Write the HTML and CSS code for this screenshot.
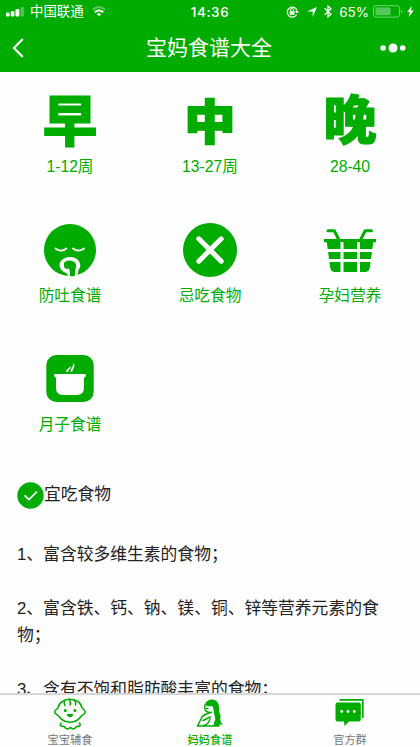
FILE: index.html
```html
<!DOCTYPE html>
<html lang="zh-CN">
<head>
<meta charset="utf-8">
<title>宝妈食谱大全</title>
<link rel="stylesheet" href="styles.css">
</head>
<body>
<div class="phone">
  <header class="header">
    <div class="status">
      <div class="status-side">
        <svg class="signal" width="20" height="10" viewBox="0 0 20 10" fill="#fff"><rect y="5.5" width="3.6" height="4" rx="1.2"/><rect x="4.8" y="4" width="3.6" height="5.5" rx="1.2"/><rect x="9.5" y="2" width="3.8" height="7.5" rx="1.2"/><rect x="14.4" y="0" width="3.8" height="9.5" rx="1.2" opacity=".3"/></svg>
        <span class="carrier">中国联通</span>
        <svg class="wifi" width="14" height="11" viewBox="0 0 14 11" fill="none" stroke="#fff" stroke-width="2"><path d="M.8 3.8Q7-1.6 13.2 3.8" opacity=".35"/><path d="M2.8 6.2Q7 2.8 11.2 6.2"/><path d="M4.8 8Q7 6.4 9.2 8L7 10.3Z" fill="#fff" stroke="none"/></svg>
      </div>
      <time class="clock">14:36</time>
      <div class="status-side status-right">
        <svg width="13" height="12" viewBox="0 0 13 12"><path d="M10.6 8.6A5 5 0 1 1 11 4.5" fill="none" stroke="#fff" stroke-width="1.2"/><path d="M9 5h4l-2 2.5zM3.6 5.2h5v3.6h-5z" fill="#fff"/><path d="M4.600 5.200V4a1.500 1.500 0 0 1 3 0v1.200" fill="none" stroke="#fff"/></svg>
        <svg class="locate" width="10" height="10" viewBox="0 0 10 10"><path d="M10 0 5.700 10V4.600L0 4.500z" fill="#fff"/></svg>
        <svg class="bluetooth" width="8" height="13" viewBox="0 0 8 13"><path d="M.6 3.300 7 9.300 4 12V1l3 2.700-6.400 6" fill="none" stroke="#fff" stroke-width="1.200"/></svg>
        <span class="percent">65%</span>
        <svg width="30" height="13" viewBox="0 0 30 13"><rect x=".5" y=".7" width="26" height="11.400" rx="2.600" fill="none" stroke="#70d577"/><rect x="2.400" y="2.500" width="15.200" height="7.800" rx="1" fill="#55c85b"/><path d="M28 4.500q2 1.800 0 3.800z" fill="#82d985"/></svg>
        <svg class="bolt" width="7" height="11" viewBox="0 0 7 11"><path d="M4.800 0 .2 6h2.500L1.800 11 6.700 4.600H4z" fill="#fff"/></svg>
      </div>
    </div>
    <div class="navbar">
      <svg width="12" height="20" viewBox="0 0 12 20"><path d="M10.800 1 2 10l8.800 9" fill="none" stroke="#fff" stroke-width="2.200"/></svg>
      <h1>宝妈食谱大全</h1>
      <svg width="26" height="10" viewBox="0 0 26 10" fill="#fff"><circle cx="3.100" cy="5" r="2.800"/><circle cx="13" cy="5" r="4.500"/><circle cx="22.700" cy="5" r="2.800"/></svg>
    </div>
  </header>

  <main class="content">
    <nav class="menu">
      <a class="item"><span class="art glyph">早</span><span class="label">1-12周</span></a>
      <a class="item"><span class="art glyph glyph-mid">中</span><span class="label">13-27周</span></a>
      <a class="item"><span class="art glyph glyph-late">晚</span><span class="label">28-40</span></a>
      <a class="item">
        <svg class="art" viewBox="0 0 54 54"><circle cx="27" cy="27" r="26" fill="#00ac00"/><path d="M12.500 25.500q5.500 4.200 11 0M30 25.500q5.500 4.200 11 0" fill="none" stroke="#fff" stroke-width="1.800" stroke-linecap="round"/><path d="M25 53.500C25 49.500 21.500 50 19 47.500 13 41 19 34 27 34c9 0 13 8 8.500 13L34 53.500z" fill="#fff"/><path d="M21 40c1.500-2.500 5-2.500 7-2.300 5.500.8 6 5 4.500 8.300l-.8 7.300h-4.700c-.5-3 .5-5-1-7.500-2.500.3-5-.5-5-2.500z" fill="#00ac00"/></svg>
        <span class="label">防吐食谱</span>
      </a>
      <a class="item">
        <svg class="art" viewBox="0 0 54 54"><circle cx="27" cy="27" r="27" fill="#00ac00"/><path d="m15.800 15.800 22.400 22.400m0-22.400L15.800 38.200" stroke="#fff" stroke-width="5" stroke-linecap="round"/></svg>
        <span class="label">忌吃食物</span>
      </a>
      <a class="item">
        <svg class="art" viewBox="0 0 54 54"><path d="M5 7.700h6.300L16 17M48.500 7.700h-6.300L37.500 17" fill="none" stroke="#00ac00" stroke-width="3" stroke-linecap="round" stroke-linejoin="round"/><path d="M1 16h52v3.200h-2.800L47 43.500q-.7 5.500-5 5.500H12q-4.300 0-5-5.500L3.800 19.200H1z" fill="#00ac00"/><path d="M2 27.500h50M3 37.500h48M19 19v30M35.500 19v30" stroke="#fff" stroke-width="3"/></svg>
        <span class="label">孕妇营养</span>
      </a>
      <a class="item">
        <svg class="art" viewBox="0 0 54 54"><rect x="3.300" y="3" width="47.400" height="47" rx="10" fill="#00ac00"/><path d="M11.500 22h31q1 2.500-1 3.500h-.6V36q0 7-7 7H20q-7 0-7-7V25.500h-.5q-2-1-1-3.500zM23 19.800c0-3 4-3.300 4.200-6 1.800 3-2.200 3.500-2 6zm4.500 0c0-4 2.900-4.200 2.600-8.800 3.400 4-.7 5-.7 8.800z" fill="#fff"/></svg>
        <span class="label">月子食谱</span>
      </a>
    </nav>
    <section class="article">
      <h2><svg width="27" height="27" viewBox="0 0 27 27"><circle cx="13.500" cy="13.500" r="13.200" fill="#00ac00"/><path d="m7.500 13.300 4.400 4.300 8.100-8" fill="none" stroke="#fff" stroke-width="1.700"/></svg><span>宜吃食物</span></h2>
      <p>1、富含较多维生素的食物；</p>
      <p>2、富含铁、钙、钠、镁、铜、锌等营养元素的食物；</p>
      <p>3、含有不饱和脂肪酸丰富的食物；</p>
    </section>
  </main>

  <footer class="tabbar">
    <a class="tab">
      <svg width="34" height="32" viewBox="0 0 34 32" fill="none" stroke="#00ac00" stroke-width="1.500" stroke-linecap="round" stroke-linejoin="round"><path d="M5 9.500C7.500-1.500 26.500-1.500 29 9.500c.5 1.500 3.300 2.500 3.300 4.500 0 2.300-2.800 2.500-4.300 4.500-5.500 7.500-16.500 7.500-22 0-1.500-2-4.300-2.200-4.300-4.500C1.700 12 4.500 11 5 9.500z"/><path d="M11.500 2.500q-1 2.500.5 5M16 1.500q2.500 2.500 1 5.500M21 2q2.500 2.500 1.500 5"/><path d="M8 25q-2.500 3.200 3 3.500 3.500 4.500 6.500.8 3 3.700 6-.8 5.500-.3 3-3.500"/><circle cx="12.300" cy="12.500" r=".8" fill="#00ac00"/><circle cx="22" cy="12.500" r=".8" fill="#00ac00"/><path d="M14.500 16.800h5q-2.300 3.500-5 0z" fill="#00ac00"/></svg>
      <span>宝宝辅食</span>
    </a>
    <a class="tab active">
      <svg width="34" height="32" viewBox="0 0 34 32"><path d="M12 7C13 1 22-.5 25 5c2 4 .2 7.500 2 11 1.400 3-.4 4.500.5 7 .8 2.200 1.800 2.500 2 3-2.500 2-5.500 0-5.500-2-1 2-2.500 1.500-3 .5 3-4-.5-7 0-11l-1.500-5.500q-4 1-7.500-1z" fill="#00ac00"/><g fill="none" stroke="#00ac00" stroke-width="1.500" stroke-linecap="round" stroke-linejoin="round"><path d="M12 7c-1.500 6 2.500 8 6.500 7.200-2 .8-7.500 1.800-9.500 4.800L4.500 28H26l-2-3M9.500 28c5-1.500 6-3 7.500-6.500M10 22.500l7.500-3.500M13.500 10.500h1.500"/></g><path d="m22 23 4 5h-6z" fill="#00ac00"/></svg>
      <span>妈妈食谱</span>
    </a>
    <a class="tab">
      <svg width="34" height="32" viewBox="0 0 34 32"><path d="M6.500 1.900h23.300V20" fill="none" stroke="#00ac00" stroke-width="1.700" stroke-linejoin="round"/><path d="M4.500 4.500h21.300q2 0 2 2v15q0 2-2 2H16L11.500 28 11 23.500H4.500q-2 0-2-2v-15q0-2 2-2z" fill="#00ac00"/><g fill="#fff"><circle cx="8.700" cy="13.500" r="1.400"/><circle cx="15" cy="13.500" r="1.400"/><circle cx="21.300" cy="13.500" r="1.400"/></g></svg>
      <span>官方群</span>
    </a>
  </footer>
</div>
</body>
</html>
```
FILE: styles.css
```css
* { box-sizing: border-box; }
body { margin: 0; font-family: "Liberation Sans", "Noto Sans CJK SC", sans-serif; background: #fefefe; }
.phone { display: flex; flex-direction: column; width: 420px; height: 747px; overflow: hidden; }
svg { display: block; flex: none; }
.header { height: 72px; flex: none; background: #00ac00; color: #fff; }
.status { display: grid; grid-template-columns: 1fr auto 1fr; align-items: center; height: 23px; padding: 0 6px; }
.status-side { display: flex; align-items: center; }
.status-right { justify-content: flex-end; }
.carrier { margin-left: 4px; font-size: 13.4px; line-height: 20px; }
.wifi { margin-left: 8px; }
.clock { font-family: Inter, sans-serif; font-size: 13.5px; font-weight: 500; letter-spacing: .6px; }
.locate { margin-left: 8px; }
.bluetooth { margin-left: 7px; }
.percent { margin: 0 4px 0 7px; font-family: Inter, sans-serif; font-size: 13.5px; }
.bolt { margin-left: 4px; }
.navbar { display: flex; align-items: center; justify-content: space-between; height: 49px; padding: 0 14px 0 12px; }
.navbar h1 { margin: 0 0 0 14px; font-size: 21px; font-weight: 400; line-height: 30px; }
.content { flex: 1; min-height: 0; overflow: hidden; }
.menu { display: grid; grid-template-columns: repeat(3, 140px); grid-auto-rows: 129px; padding-top: 22px; color: #00ac00; }
.item { display: flex; flex-direction: column; align-items: center; }
.art { display: block; width: 54px; height: 54px; }
.glyph { display: flex; align-items: center; justify-content: center; padding-bottom: 7px; font-family: "Noto Sans CJK SC", sans-serif; font-size: 55px; font-weight: 900; line-height: 47px; -webkit-text-stroke: 1px #00ac00; }
.glyph-mid { padding-bottom: 5px; font-size: 47px; -webkit-text-stroke: 2px #00ac00; transform: scaleX(1.08); }
.glyph-late { padding-bottom: 8px; font-size: 53px; }
.label { margin-top: 7px; font-size: 15.7px; line-height: 24px; }
.article { padding: 1px 17px 0; color: #222; font-size: 16.8px; line-height: 26.9px; }
.article h2 { display: flex; align-items: center; height: 27px; margin: 0; font-size: inherit; font-weight: 400; }
.article p { margin: 0 0 27px; }
.article h2 + p { margin-top: 33px; }
.tabbar { display: grid; grid-template-columns: repeat(3, 140px); height: 54px; flex: none; border-top: 2px solid #d6d6dc; background: #fefefe; color: #777; font-size: 11.2px; line-height: 16px; }
.tab { display: flex; flex-direction: column; align-items: center; padding-top: 3px; }
.tab span { margin-top: 2px; }
.active { color: #00ac00; font-weight: 500; }
```
